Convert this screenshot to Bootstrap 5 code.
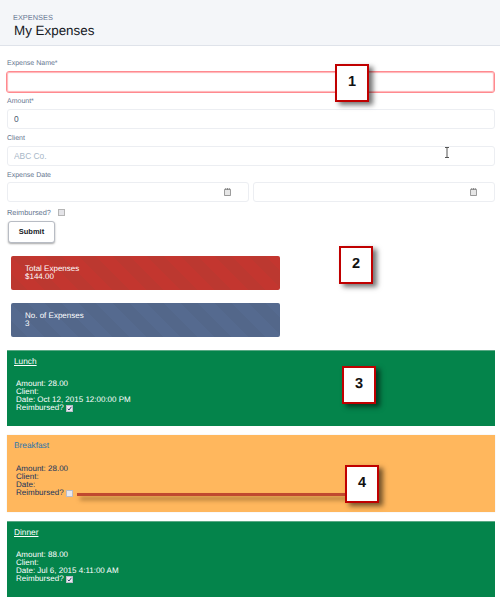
<!DOCTYPE html>
<html lang="en">
<head>
<meta charset="utf-8">
<title>My Expenses</title>
<link rel="stylesheet" href="https://cdn.jsdelivr.net/npm/bootstrap@5.3.0/dist/css/bootstrap.min.css">
<style>
html,body{height:598px;overflow:hidden}
body{font-family:"Liberation Sans",Arial,sans-serif;font-size:9px;color:#16325c;position:relative;background:#fff;text-rendering:geometricPrecision}
.page-top{height:46px;background:#f4f6f9;border-bottom:1px solid #dfe3ea;padding:13px 13px 0}
.page-kicker{font-size:7.4px;line-height:9px;color:#6a7a96}
.page-title{font-size:13.4px;line-height:18px;margin:0 0 0 1px;font-weight:400;color:#16191f}
.exp-form{padding:0 5px 0 7px}
.fld-label{display:block;font-size:7px;line-height:9px;color:#66768f;margin:0 0 3px}
.fld-input{display:block;width:100%;height:20px;border:1px solid #eceef2;border-radius:3px;background:#fff;padding:0 6px;font-size:8.4px;color:#4a5a70;font-family:"Liberation Sans",sans-serif;outline:0}
.fld-input::placeholder{color:#a8b7c7;opacity:1}
.fld-bad{border-color:#ff8a8f;box-shadow:0 0 1px 1px #ffb3b6 inset;height:22px;margin-left:-1px;width:calc(100% + 1px)}
.fld-one{height:37px}
.fld-first{margin-top:13px;height:38px}
.date-label{margin-bottom:2px}
.date-wrap{position:relative;flex:1 1 0;min-width:0}
.date-ico{position:absolute;right:18px;top:6px;width:7px;height:8px}
.reimb{display:flex;align-items:center;height:9px;margin-top:6px;font-size:7.4px;line-height:9px;color:#66768f}
.tick{width:7px;height:7px;border:1px solid #b5b5b5;background:#e4e4e8;margin-left:7px;display:inline-block}
.btn-sub{display:block;width:47px;height:22px;margin:4px 0 0 1px;padding:0;background:#fff;border:1px solid #b8bcc4;border-radius:3px;font-size:7.5px;font-weight:700;color:#16191f;box-shadow:0 1px 2px rgba(0,0,0,.35)}
.stat-tile{margin-left:11px;width:269px;height:34px;border-radius:2px;color:#fff;padding:9px 14px;font-size:8px;line-height:8px}
.tile-red{margin-top:13px;background-color:#c4362f;background-image:repeating-linear-gradient(45deg,#bc3830 0 12px,#c3362f 12px 24px)}
.tile-blue{margin-top:13px;background-color:#54698d;background-image:repeating-linear-gradient(45deg,#53678a 0 12px,#556a8f 12px 24px)}
.exp-card{margin:0 5px 0 7px;height:76px;padding:5px 7px;font-size:8px;line-height:8px}
.exp-green{background:#04844b;color:#fff;border-top:1px solid #5aa985}
.exp-orange{background:#ffb75d;color:#16325c;box-shadow:0 0 1px #ddd;height:77px}
.exp-name{font-size:8.3px;line-height:10px;display:block}
.exp-green .exp-name{color:#fff;text-decoration:underline}
.exp-orange .exp-name{color:#2b75ad;text-decoration:none}
.exp-body{margin:14px 0 0 2px}
.exp-orange .exp-body{margin-top:15px}
.exp-row{display:flex;align-items:center;height:8px}
.mini-box{display:inline-block;width:7px;height:7px;margin-left:2px;background:#e8e8ee;border:1px solid #b9bcc8;position:relative}
.mini-box svg{position:absolute;left:0;top:0;width:5px;height:5px}
.gap-top{margin-top:13px}
.gap-mid{margin-top:9px}
.callout{position:absolute;width:34px;height:38px;background:#fff;border:2px solid #c00000;box-shadow:4px 3px 5px rgba(0,0,0,.55);display:flex;align-items:center;justify-content:center;font-weight:700;font-size:14.5px;color:#111}
.call-a{left:335px;top:64px}
.call-b{left:339px;top:246px}
.call-c{left:342px;top:366px}
.call-d{left:345px;top:465px}
.lead-line{position:absolute;left:77px;top:493px;width:268px;height:3px;background:#c0492f;box-shadow:3px 4px 4px rgba(90,60,20,.55)}
.ibeam{position:absolute;left:444px;top:147px;width:6px;height:11px}
</style>
</head>
<body>
<header class="page-top">
  <div class="page-kicker">EXPENSES</div>
  <h1 class="page-title">My Expenses</h1>
</header>
<form class="exp-form">
  <div class="fld-first">
    <label class="fld-label">Expense Name*</label>
    <input class="fld-input fld-bad" type="text">
  </div>
  <div class="fld-one">
    <label class="fld-label">Amount*</label>
    <input class="fld-input" type="text" value="0">
  </div>
  <div class="fld-one">
    <label class="fld-label">Client</label>
    <input class="fld-input" type="text" placeholder="ABC Co.">
  </div>
  <label class="fld-label date-label">Expense Date</label>
  <div class="d-flex gap-1">
    <div class="date-wrap">
      <input class="fld-input" type="text">
      <svg class="date-ico" viewBox="0 0 8 9"><path d="M.5 1.5h7v7h-7z" fill="#e6e6e6" stroke="#8a8a8a"/><path d="M2 0v2M4 0v2M6 0v2" stroke="#777"/></svg>
    </div>
    <div class="date-wrap">
      <input class="fld-input" type="text">
      <svg class="date-ico" viewBox="0 0 8 9"><path d="M.5 1.5h7v7h-7z" fill="#e6e6e6" stroke="#8a8a8a"/><path d="M2 0v2M4 0v2M6 0v2" stroke="#777"/></svg>
    </div>
  </div>
  <div class="reimb">Reimbursed?<span class="tick"></span></div>
  <button class="btn-sub" type="button">Submit</button>
</form>
<div class="stat-tile tile-red">Total Expenses<br>$144.00</div>
<div class="stat-tile tile-blue">No. of Expenses<br>3</div>
<div class="exp-card exp-green gap-top">
  <a class="exp-name" href="#">Lunch</a>
  <div class="exp-body">Amount: 28.00<br>Client:<br>Date: Oct 12, 2015 12:00:00 PM
    <div class="exp-row">Reimbursed?<span class="mini-box"><svg viewBox="0 0 5 5"><path d="M.8 2.8l1.2 1.2L4.4.8" fill="none" stroke="#2d3a6b"/></svg></span></div></div>
</div>
<div class="exp-card exp-orange gap-mid">
  <a class="exp-name" href="#">Breakfast</a>
  <div class="exp-body">Amount: 28.00<br>Client:<br>Date:
    <div class="exp-row">Reimbursed?<span class="mini-box"></span></div></div>
</div>
<div class="exp-card exp-green gap-mid">
  <a class="exp-name" href="#">Dinner</a>
  <div class="exp-body">Amount: 88.00<br>Client:<br>Date: Jul 6, 2015 4:11:00 AM
    <div class="exp-row">Reimbursed?<span class="mini-box"><svg viewBox="0 0 5 5"><path d="M.8 2.8l1.2 1.2L4.4.8" fill="none" stroke="#2d3a6b"/></svg></span></div></div>
</div>
<svg class="ibeam" viewBox="0 0 6 11"><path d="M1 .5h4M1 10.5h4M3 .5v10" stroke="#555" fill="none"/></svg>
<div class="lead-line"></div>
<div class="callout call-a">1</div>
<div class="callout call-b">2</div>
<div class="callout call-c">3</div>
<div class="callout call-d">4</div>
<script src="https://cdn.jsdelivr.net/npm/bootstrap@5.3.0/dist/js/bootstrap.bundle.min.js"></script>
</body>
</html>
